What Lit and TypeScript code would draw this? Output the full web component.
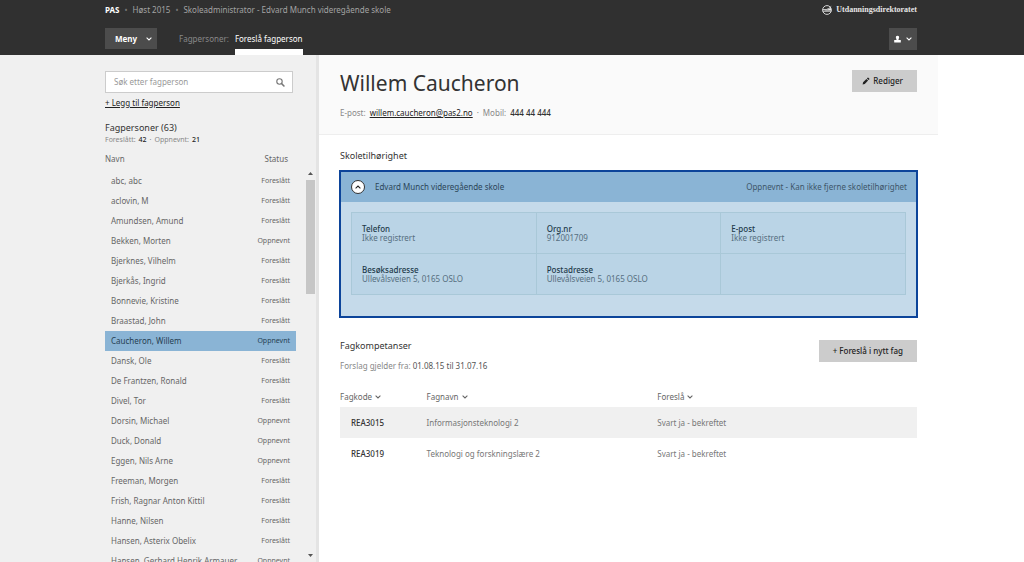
import { LitElement, html, css, svg } from "lit";
import { customElement, state } from "lit/decorators.js";
import { classMap } from "lit/directives/class-map.js";

const people: [string, string][] = [
  ["abc, abc", "Foreslått"],
  ["aclovin, M", "Foreslått"],
  ["Amundsen, Amund", "Foreslått"],
  ["Bekken, Morten", "Oppnevnt"],
  ["Bjerknes, Vilhelm", "Foreslått"],
  ["Bjerkås, Ingrid", "Foreslått"],
  ["Bonnevie, Kristine", "Foreslått"],
  ["Braastad, John", "Foreslått"],
  ["Caucheron, Willem", "Oppnevnt"],
  ["Dansk, Ole", "Foreslått"],
  ["De Frantzen, Ronald", "Foreslått"],
  ["Divel, Tor", "Foreslått"],
  ["Dorsin, Michael", "Oppnevnt"],
  ["Duck, Donald", "Oppnevnt"],
  ["Eggen, Nils Arne", "Oppnevnt"],
  ["Freeman, Morgen", "Foreslått"],
  ["Frish, Ragnar Anton Kittil", "Foreslått"],
  ["Hanne, Nilsen", "Foreslått"],
  ["Hansen, Asterix Obelix", "Foreslått"],
  ["Hansen, Gerhard Henrik Armauer", "Oppnevnt"],
];

const details: [string, string][] = [
  ["Telefon", "Ikke registrert"],
  ["Org.nr", "912001709"],
  ["E-post", "Ikke registrert"],
  ["Besøksadresse", "Ullevålsveien 5, 0165 OSLO"],
  ["Postadresse", "Ullevålsveien 5, 0165 OSLO"],
  ["", ""],
];

const subjects = [
  ["REA3015", "Informasjonsteknologi 2", "Svart ja - bekreftet"],
  ["REA3019", "Teknologi og forskningslære 2", "Svart ja - bekreftet"],
];

const icon = (box: string, cls: string, body: unknown) =>
  html`<svg class=${cls} viewBox=${box} aria-hidden="true">${body}</svg>`;

const chevron = () =>
  icon("0 0 6 4", "chevron", svg`<path d="M.6 .7L3 2.9L5.4 .7" fill="none" stroke="currentColor" stroke-width="1.1"/>`);

@customElement("app-root")
export class AppRoot extends LitElement {
  @state() private selected = 8;

  static styles = css`
    :host {
      display: flex;
      flex-direction: column;
      height: 100vh;
      overflow: hidden;
      background: #fff;
      color: #666;
      font: 8px/10px "Noto Sans", sans-serif;
    }
    * { box-sizing: border-box; }
    h1, h2, p, dl, dd { margin: 0; }
    button { font: inherit; color: inherit; border: 0; padding: 0; background: none; cursor: pointer; }
    button, .brand, .search { display: flex; align-items: center; }
    a { color: #222; }
    b { font-weight: 500; color: #333; }
    table { border-collapse: collapse; width: 100%; }
    th, td { padding: 0; text-align: left; font-weight: 400; }
    .chevron { width: 6px; height: 4px; flex: none; }

    header { background: #303030; color: #a3a3a3; padding: 0 107px 0 105px; height: 55px; flex: none; }
    .top, .nav { display: flex; justify-content: space-between; }
    .top { height: 20px; align-items: center; }
    .crumbs { display: flex; gap: 5px; }
    .crumbs strong { color: #fff; }
    .dot { color: #777; }
    .brand { gap: 4px; color: #e6e6e6; font: bold 8px/10px "Liberation Serif", serif; }
    .logo { width: 10px; height: 10px; }
    .nav { padding-top: 8px; height: 35px; }
    .left { display: flex; }
    .menu { background: #4c4c4c; color: #fff; width: 52px; height: 21px; padding: 0 5px 0 10px; justify-content: space-between; font-weight: 700; }
    .user { background: #4c4c4c; color: #fff; width: 28px; height: 22px; justify-content: center; gap: 5px; }
    .head { width: 7px; height: 8px; }
    .section { margin: 6px 6px 0 22px; color: #888; }
    .tab { color: #fff; text-decoration: none; padding-top: 6px; border-bottom: 6px solid #fff; }

    .page { display: grid; grid-template-columns: 319px minmax(0, 1fr); flex: 1; min-height: 0; }
    aside { display: flex; flex-direction: column; min-height: 0; background: #f0f0f0; border-right: 3px solid #e4e4e4; padding: 16px 0 0 105px; }
    .search { width: 188px; height: 22px; background: #fff; border: 1px solid #ccc; padding: 0 7px 0 8px; }
    .search input { flex: 1; min-width: 0; border: 0; outline: 0; padding: 0; font: inherit; color: #333; background: none; }
    .search input::placeholder { color: #999; opacity: 1; }
    .lens { width: 9px; height: 9px; }
    .add { align-self: flex-start; margin-top: 5px; }
    h2 { font-size: 9px; line-height: 12px; font-weight: 400; color: #333; }
    aside h2 { margin-top: 14px; }
    .small { font-size: 7px; color: #888; display: flex; gap: 3px; margin-top: 1px; }
    .small b { color: #222; }
    .listing { display: flex; flex: 1; min-height: 0; gap: 10px; margin-top: 1px; }
    .scroll { width: 191px; overflow-y: auto; scrollbar-width: none; }
    thead th { height: 25px; }
    .people th { position: sticky; top: 0; background: #f0f0f0; }
    .people th:last-child { text-align: right; padding-right: 8px; }
    .people td { height: 20px; padding: 0 6px; }
    .people td:last-child { text-align: right; font-size: 7px; }
    .people tr.on td { background: #8ab4d5; color: #263f52; }
    .bar { display: flex; flex-direction: column; align-items: center; width: 9px; padding: 26px 0 5px; }
    .arrow { width: 5px; height: 3px; flex: none; color: #555; }
    .track { flex: 1; width: 100%; margin: 5px 0; }
    .thumb { height: 31%; background: #c6c6c6; }

    .hero { background: #fafafa; border-bottom: 1px solid #eee; margin-right: 86px; padding: 15px 21px 0; height: 80px; display: flex; justify-content: space-between; align-items: flex-start; }
    h1 { font-size: 21px; line-height: 26px; font-weight: 400; color: #333; }
    .contact { display: flex; gap: 4px; margin-top: 12px; color: #888; }
    .btn { background: #ccc; color: #222; height: 22px; gap: 3px; font-weight: 500; justify-content: center; padding: 0 14px 0 10px; }
    .pen { width: 8px; height: 8px; }
    .body { padding: 15px 107px 0 21px; }
    .card { border: 2px solid #0c449a; background: #c5daea; margin: 8px -1px 0; }
    .bar-head { display: flex; align-items: center; gap: 10px; height: 30px; background: #8ab4d5; color: #2b4558; padding: 0 9px 0 10px; }
    .bar-head span:last-child { margin-left: auto; color: #3e5669; }
    .round { width: 14px; height: 14px; border: 1px solid #333; border-radius: 50%; background: #fff; color: #222; justify-content: center; }
    .round .chevron { transform: rotate(180deg); }
    dl { display: grid; grid-template-columns: repeat(3, 1fr); margin: 10px 10px 21px; background: #bad4e6; border: 1px solid #a9c8d8; border-width: 1px 0 0 1px; }
    .cell { height: 41px; border: 1px solid #a9c8d8; border-width: 0 1px 1px 0; padding: 11px 10px; line-height: 9px; color: #566f80; }
    dt { color: #223a4a; font-weight: 500; }
    dd { line-height: 10px; }
    .skills { display: flex; justify-content: space-between; align-items: flex-start; margin-top: 22px; }
    .skills p { margin-top: 9px; color: #888; }
    .skills b { color: #555; font-weight: 400; }
    .skills .btn { padding: 0 14px; }
    .subjects { margin-top: 16px; table-layout: fixed; }
    .subjects th button { gap: 3px; }
    .subjects thead th { height: 20px; }
    .subjects thead th:nth-child(1) { width: 15%; }
    .subjects thead th:nth-child(2) { width: 40%; }
    .subjects tbody th, .subjects td { height: 31px; color: #777; }
    .subjects tbody th { padding-left: 11px; color: #333; font-weight: 500; }
    .subjects tbody tr:nth-child(odd) { background: #f0f0f0; }
  `;

  render() {
    return html`
      <header>
        <div class="top">
          <div class="crumbs"><strong>PAS</strong><span class="dot">•</span><span>Høst 2015</span><span class="dot">•</span><span>Skoleadministrator - Edvard Munch videregående skole</span></div>
          <div class="brand">
            ${icon("0 0 10 10", "logo", svg`<circle cx="5" cy="5" r="4.4" fill="none" stroke="currentColor" stroke-width=".9"/><path d="M.8 4.6H4.2Q7 4 9.2 1.4M.8 6.2H9.2" fill="none" stroke="currentColor" stroke-width=".9"/><path d="M2 5.5Q6.4 5 8.8 2.8L9.2 5.5Z" fill="currentColor"/>`)}
            <span>Utdanningsdirektoratet</span>
          </div>
        </div>
        <nav class="nav">
          <div class="left">
            <button class="menu">Meny ${chevron()}</button>
            <span class="section">Fagpersoner:</span>
            <a class="tab" href="#foresla">Foreslå fagperson</a>
          </div>
          <button class="user" aria-label="Brukermeny">
            ${icon("0 0 7 8", "head", svg`<path d="M3.5 .8C4.8 .8 5.3 1.7 5.1 2.8C5 3.6 4.5 4 4.4 4.9H6.8V7.5H.2V4.9H2.6C2.5 4 2 3.6 1.9 2.8C1.7 1.7 2.2 .8 3.5 .8Z" fill="currentColor"/>`)}
            ${chevron()}
          </button>
        </nav>
      </header>
      <div class="page">
        <aside>
          <label class="search">
            <input type="text" placeholder="Søk etter fagperson" aria-label="Søk etter fagperson" />
            ${icon("0 0 8 8", "lens", svg`<circle cx="3.1" cy="3.1" r="2.4" fill="none" stroke="#777" stroke-width="1"/><path d="M5 5L7.5 7.5" stroke="#777" stroke-width="1.3"/>`)}
          </label>
          <a class="add" href="#ny">+ Legg til fagperson</a>
          <h2>Fagpersoner (63)</h2>
          <p class="small"><span>Foreslått:</span><b>42</b><span>·</span><span>Oppnevnt:</span><b>21</b></p>
          <div class="listing">
            <div class="scroll">
              <table class="people">
                <thead><tr><th>Navn</th><th>Status</th></tr></thead>
                <tbody>
                  ${people.map(([name, status], i) => html`<tr class=${classMap({ on: i === this.selected })} @click=${() => (this.selected = i)}><td>${name}</td><td>${status}</td></tr>`)}
                </tbody>
              </table>
            </div>
            <div class="bar">
              ${icon("0 0 5 3", "arrow", svg`<path d="M0 3L2.5 0L5 3Z" fill="currentColor"/>`)}
              <div class="track"><div class="thumb"></div></div>
              ${icon("0 0 5 3", "arrow", svg`<path d="M0 0L2.5 3L5 0Z" fill="currentColor"/>`)}
            </div>
          </div>
        </aside>
        <main>
          <section class="hero">
            <div>
              <h1>Willem Caucheron</h1>
              <p class="contact"><span>E-post:</span><a href="mailto:willem.caucheron@pas2.no">willem.caucheron@pas2.no</a><span>·</span><span>Mobil:</span><b>444 44 444</b></p>
            </div>
            <button class="btn">
              ${icon("0 0 8 8", "pen", svg`<path d="M.6 7.4L1.1 5.2L4.4 1.9L6.1 3.6L2.8 6.9ZM4.9 1.4L5.6 .7Q6 .4 6.4 .8L7.2 1.6Q7.6 2 7.3 2.4L6.6 3.1Z" fill="currentColor"/>`)}
              Rediger
            </button>
          </section>
          <div class="body">
            <h2>Skoletilhørighet</h2>
            <section class="card">
              <div class="bar-head">
                <button class="round" aria-label="Skjul detaljer">${chevron()}</button>
                <span>Edvard Munch videregående skole</span>
                <span>Oppnevnt - Kan ikke fjerne skoletilhørighet</span>
              </div>
              <dl>${details.map(([k, v]) => html`<div class="cell">${k ? html`<dt>${k}</dt><dd>${v}</dd>` : ""}</div>`)}</dl>
            </section>
            <section class="skills">
              <div>
                <h2>Fagkompetanser</h2>
                <p>Forslag gjelder fra: <b>01.08.15 til 31.07.16</b></p>
              </div>
              <button class="btn">+ Foreslå i nytt fag</button>
            </section>
            <table class="subjects">
              <thead><tr>${["Fagkode", "Fagnavn", "Foreslå"].map((t) => html`<th><button>${t} ${chevron()}</button></th>`)}</tr></thead>
              <tbody>${subjects.map(([code, name, answer]) => html`<tr><th scope="row">${code}</th><td>${name}</td><td>${answer}</td></tr>`)}</tbody>
            </table>
          </div>
        </main>
      </div>
    `;
  }
}
